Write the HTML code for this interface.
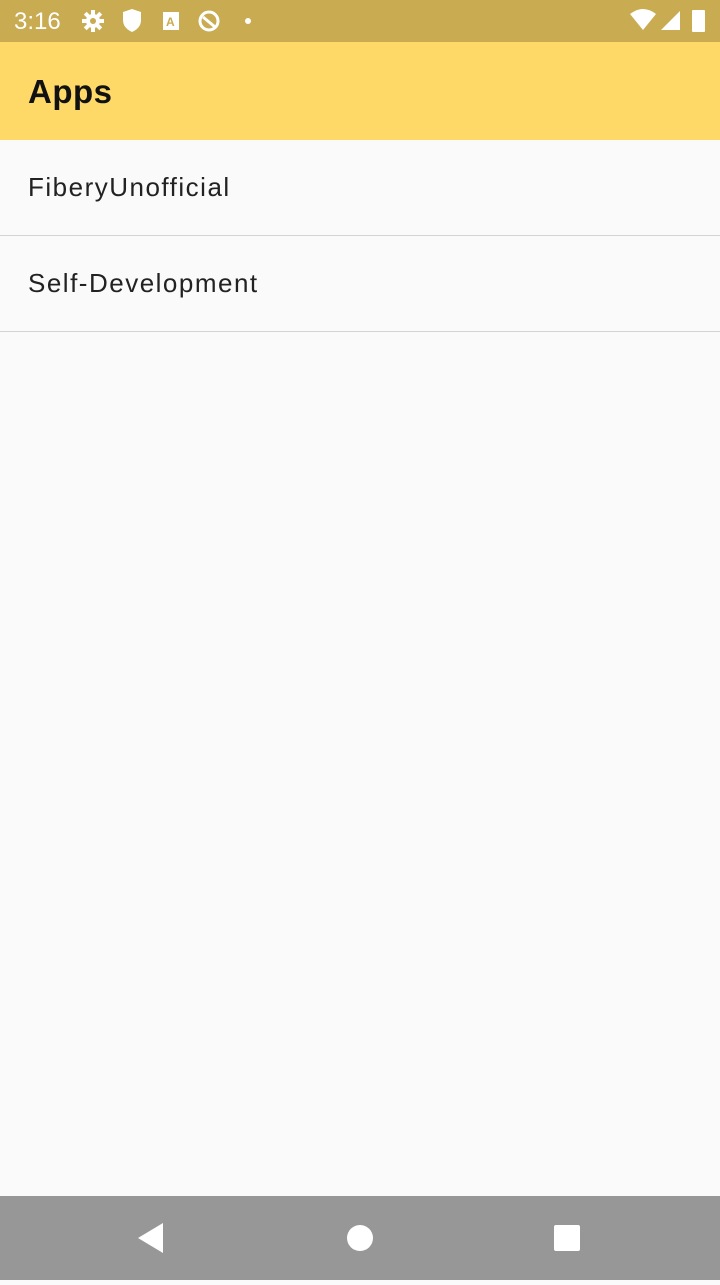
<!DOCTYPE html><html><head><style>
body{margin:0;width:720px;height:1280px;background:#fafafa;font-family:"Liberation Sans",sans-serif;position:relative;overflow:hidden}
.sb{position:absolute;top:0;left:0;width:720px;height:42px;background:#c9ab51;color:#fff}
.ab{position:absolute;top:42px;left:0;width:720px;height:98px;background:#fed968}
.ab h1{margin:0;position:absolute;left:28px;top:31px;font-size:33px;font-weight:bold;color:#111;letter-spacing:0.5px}
.it{position:absolute;left:0;width:720px;height:95px;border-bottom:1.5px solid #d4d4d4;font-size:26px;color:#222;letter-spacing:1.5px}
.it span{position:absolute;left:28px;top:32px}
.nb{position:absolute;bottom:0;left:0;width:720px;height:84px;background:#979797}
</style></head><body>
<div class="sb"><span style="position:absolute;left:14px;top:8px;font-size:24px">3:16</span>
<svg width="720" height="42" style="position:absolute;left:0;top:0">
<g fill="#fff"><circle cx="93" cy="21" r="7"/>
<rect x="91" y="10" width="4" height="22"/><rect x="82" y="19" width="22" height="4"/>
<rect x="91" y="10" width="4" height="22" transform="rotate(45 93 21)"/><rect x="91" y="10" width="4" height="22" transform="rotate(-45 93 21)"/></g>
<circle cx="93" cy="21" r="3" fill="#c9ab51"/>
<path d="M123 12 L132 9 L141 12 L141 20 Q141 28 132 32 Q123 28 123 20Z" fill="#fff"/>
<rect x="163" y="12" width="16" height="18" fill="#fff"/><text x="166" y="26" font-size="12" fill="#c9ab51" font-weight="bold">A</text>
<circle cx="209" cy="21" r="9" fill="none" stroke="#fff" stroke-width="3"/><path d="M203 17 L215 27" stroke="#fff" stroke-width="3"/>
<circle cx="248" cy="21" r="3" fill="#fff"/>
<path d="M630 14 Q643 4 656 14 L643 30Z" fill="#fff"/>
<path d="M680 11 L680 30 L661 30Z" fill="#fff"/>
<rect x="692" y="10" width="13" height="22" rx="1" fill="#fff"/>
</svg></div>
<div class="ab"><h1>Apps</h1></div>
<div class="it" style="top:140px"><span>FiberyUnofficial</span></div>
<div class="it" style="top:236px"><span>Self-Development</span></div>
<div class="nb"><svg width="720" height="84">
<path d="M163 27 L163 57 L138 42Z" fill="#fff"/>
<circle cx="360" cy="42" r="13" fill="#fff"/>
<rect x="554" y="29" width="26" height="26" rx="2" fill="#fff"/></svg></div>
</body></html>
